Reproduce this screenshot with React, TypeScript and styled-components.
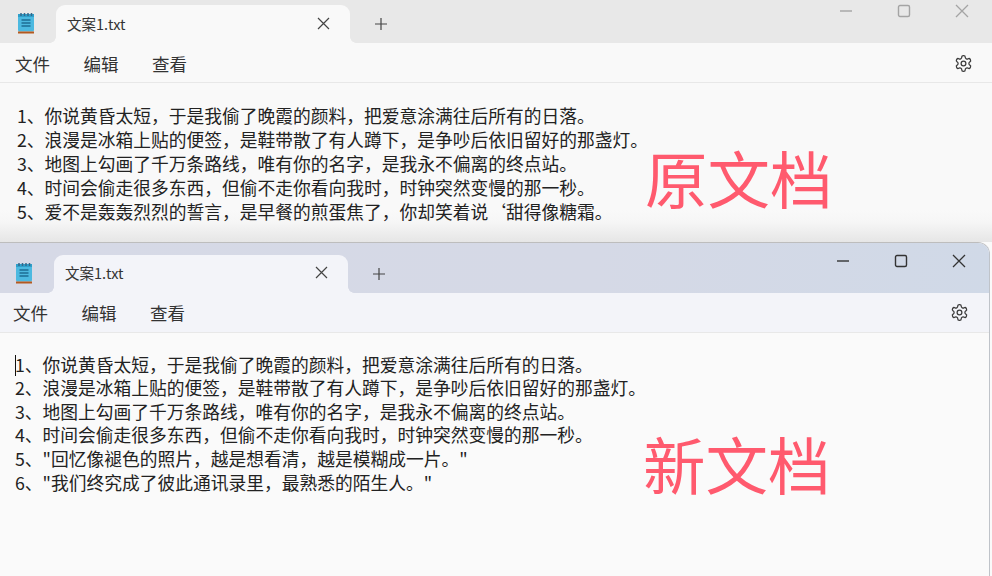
import React from "react";
import styled, { createGlobalStyle } from "styled-components";

const Global = createGlobalStyle`
  html, body { margin: 0; padding: 0; background: #fafafa; }
  body { width: 992px; height: 576px; overflow: hidden; font-family: "Noto Sans CJK SC", "Noto Sans", sans-serif; }
`;

const Page = styled.div`
  position: relative;
  width: 992px;
  height: 576px;
  display: flex;
  flex-direction: column;
  overflow: hidden;
`;

const Win = styled.section<{ $front?: boolean }>`
  height: ${(p) => (p.$front ? 334 : 242)}px;
  display: flex;
  flex-direction: column;
  background: ${(p) => (p.$front ? "#fafafa" : "linear-gradient(#f9f9f9 0, #f9f9f9 210px, #f6f6f6 222px, #e6e6e6 242px)")};
  ${(p) => p.$front && `
    border-top: 1px solid #bdbdbd;
    border-right: 1px solid #bfc3c9;
    border-radius: 0 12px 0 0;
    overflow: hidden;
    width: 989px;
  `}
`;

const TitleBar = styled.div<{ $front?: boolean }>`
  height: ${(p) => (p.$front ? 50 : 43)}px;
  flex: none;
  display: flex;
  align-items: flex-end;
  padding-left: ${(p) => (p.$front ? 15 : 17)}px;
  background: ${(p) => (p.$front ? "linear-gradient(90deg, #d6d9e6 0%, #d5d9e6 60%, #d0d9e7 100%)" : "#e8e8e8")};
`;

const AppIcon = styled.svg`
  width: 18px;
  height: 22px;
  flex: none;
  margin-bottom: 9px;
`;

const Tab = styled.div<{ $front?: boolean }>`
  --tab: ${(p) => (p.$front ? "#f3f4f9" : "#f9f9f9")};
  position: relative;
  width: 294px;
  height: 38px;
  margin-left: 21px;
  box-sizing: border-box;
  padding: 0 20px 2px 11px;
  display: flex;
  align-items: center;
  justify-content: space-between;
  border-radius: 9px 9px 0 0;
  background: var(--tab);
  color: #333;
  font-size: 14.5px;

  &::before,
  &::after {
    content: "";
    position: absolute;
    bottom: 0;
    width: 6px;
    height: 6px;
  }
  &::before {
    left: -6px;
    background: radial-gradient(circle at 0 0, transparent 5.5px, var(--tab) 6px);
  }
  &::after {
    right: -6px;
    background: radial-gradient(circle at 100% 0, transparent 5.5px, var(--tab) 6px);
  }
`;

const TabAdd = styled.svg`
  width: 14px;
  height: 14px;
  margin: 0 0 12px 24px;
  flex: none;
`;

const TabClose = styled.svg`
  width: 13px;
  height: 13px;
  flex: none;
`;

const WinControls = styled.div<{ $front?: boolean }>`
  margin-left: auto;
  align-self: flex-start;
  display: flex;
  align-items: center;
  gap: 44px;
  padding: ${(p) => (p.$front ? "11px 23px 0 0" : "4px 23px 0 0")};
  color: ${(p) => (p.$front ? "#333" : "#a4a4a4")};
`;

const Ctl = styled.svg`
  width: 14px;
  height: 14px;
  flex: none;
`;

const MenuBar = styled.nav<{ $front?: boolean }>`
  height: 40px;
  flex: none;
  box-sizing: border-box;
  display: flex;
  align-items: center;
  gap: 33.5px;
  padding: ${(p) => (p.$front ? "0 20px 0 13px" : "1px 19px 0 15px")};
  background: ${(p) => (p.$front ? "#f3f4f9" : "#f9f9f9")};
  border-bottom: 1px solid #e8e8e8;
  font-size: 17.5px;
  color: #333;
`;

const Gear = styled.svg`
  width: 19px;
  height: 19px;
  margin-left: auto;
  color: #3c3c3c;
`;

const Body = styled.div<{ $front?: boolean }>`
  padding: ${(p) => (p.$front ? "20px 0 0 15px" : "20px 0 0 17px")};
  position: relative;
  font-size: 17.75px;
  line-height: ${(p) => (p.$front ? 23.6 : 24)}px;
  color: #222;
`;

const Line = styled.div`
  white-space: nowrap;
`;

const Caret = styled.span`
  position: absolute;
  left: 15px;
  top: 22px;
  width: 1px;
  height: 21px;
  background: #111;
`;

const Stamp = styled.div<{ $x: number; $y: number }>`
  position: absolute;
  left: ${(p) => p.$x}px;
  top: ${(p) => p.$y}px;
  font-size: 62.5px;
  line-height: 70px;
  color: #ff5a6e;
  white-space: nowrap;
`;

const Notepad = () => (
  <AppIcon viewBox="0 0 18 22">
    <rect x="1" y="2" width="16" height="17.5" rx="1.5" fill="#4cb9e0" />
    <rect x="1" y="2" width="16" height="3" fill="#2e9fca" />
    <path d="M4 1v3M7.5 1v3M11 1v3M14.5 1v3" stroke="#35688a" strokeWidth="1.5" />
    <path d="M4.5 8h9M4.5 11h9M4.5 14h9" stroke="#1d6d94" strokeWidth="1.4" />
    <rect x="1" y="19.5" width="16" height="2" fill="#b4591f" />
  </AppIcon>
);

const Gearbox = () => (
  <Gear viewBox="0 0 24 24" fill="none" stroke="currentColor" strokeWidth="1.6" strokeLinecap="round" strokeLinejoin="round">
    <path d="M12.22 2h-.44a2 2 0 0 0-2 2v.18a2 2 0 0 1-1 1.73l-.43.25a2 2 0 0 1-2 0l-.15-.08a2 2 0 0 0-2.73.73l-.22.38a2 2 0 0 0 .73 2.73l.15.1a2 2 0 0 1 1 1.72v.51a2 2 0 0 1-1 1.74l-.15.09a2 2 0 0 0-.73 2.73l.22.38a2 2 0 0 0 2.73.73l.15-.08a2 2 0 0 1 2 0l.43.25a2 2 0 0 1 1 1.73V20a2 2 0 0 0 2 2h.44a2 2 0 0 0 2-2v-.18a2 2 0 0 1 1-1.73l.43-.25a2 2 0 0 1 2 0l.15.08a2 2 0 0 0 2.73-.73l.22-.39a2 2 0 0 0-.73-2.73l-.15-.08a2 2 0 0 1-1-1.74v-.5a2 2 0 0 1 1-1.74l.15-.09a2 2 0 0 0 .73-2.73l-.22-.38a2 2 0 0 0-2.73-.73l-.15.08a2 2 0 0 1-2 0l-.43-.25a2 2 0 0 1-1-1.73V4a2 2 0 0 0-2-2z" />
    <circle cx="12" cy="12" r="3" />
  </Gear>
);

const Window = ({ front, lines }: { front?: boolean; lines: string[] }) => (
  <Win $front={front}>
    <TitleBar $front={front}>
      <Notepad />
      <Tab $front={front}>
        <span>文案1.txt</span>
        <TabClose viewBox="0 0 13 13" stroke="#444" strokeWidth="1.2" fill="none">
          <path d="M1 1l11 11M12 1L1 12" />
        </TabClose>
      </Tab>
      <TabAdd viewBox="0 0 14 14" stroke="#444" strokeWidth="1.2" fill="none">
        <path d="M7 1v12M1 7h12" />
      </TabAdd>
      <WinControls $front={front}>
        <Ctl viewBox="0 0 14 14" stroke="currentColor" strokeWidth="1.4" fill="none">
          <path d="M1 7h12" />
        </Ctl>
        <Ctl viewBox="0 0 14 14" stroke="currentColor" strokeWidth="1.4" fill="none">
          <rect x="1.5" y="1.5" width="11" height="11" rx="1.5" />
        </Ctl>
        <Ctl viewBox="0 0 14 14" stroke="currentColor" strokeWidth="1.3" fill="none">
          <path d="M1 1l12 12M13 1L1 13" />
        </Ctl>
      </WinControls>
    </TitleBar>
    <MenuBar $front={front}>
      <span>文件</span>
      <span>编辑</span>
      <span>查看</span>
      <Gearbox />
    </MenuBar>
    <Body $front={front}>
      {front && <Caret />}
      {lines.map((l) => (
        <Line key={l}>{l}</Line>
      ))}
    </Body>
  </Win>
);

const oldLines = [
  "1、你说黄昏太短，于是我偷了晚霞的颜料，把爱意涂满往后所有的日落。",
  "2、浪漫是冰箱上贴的便签，是鞋带散了有人蹲下，是争吵后依旧留好的那盏灯。",
  "3、地图上勾画了千万条路线，唯有你的名字，是我永不偏离的终点站。",
  "4、时间会偷走很多东西，但偷不走你看向我时，时钟突然变慢的那一秒。",
  "5、爱不是轰轰烈烈的誓言，是早餐的煎蛋焦了，你却笑着说‘甜得像糖霜。",
];

const newLines = [
  "1、你说黄昏太短，于是我偷了晚霞的颜料，把爱意涂满往后所有的日落。",
  "2、浪漫是冰箱上贴的便签，是鞋带散了有人蹲下，是争吵后依旧留好的那盏灯。",
  "3、地图上勾画了千万条路线，唯有你的名字，是我永不偏离的终点站。",
  "4、时间会偷走很多东西，但偷不走你看向我时，时钟突然变慢的那一秒。",
  "5、\"回忆像褪色的照片，越是想看清，越是模糊成一片。\"",
  "6、\"我们终究成了彼此通讯录里，最熟悉的陌生人。\"",
];

export default function App() {
  return (
    <Page>
      <Global />
      <Window lines={oldLines} />
      <Window front lines={newLines} />
      <Stamp $x={645} $y={142}>原文档</Stamp>
      <Stamp $x={643} $y={428}>新文档</Stamp>
    </Page>
  );
}
